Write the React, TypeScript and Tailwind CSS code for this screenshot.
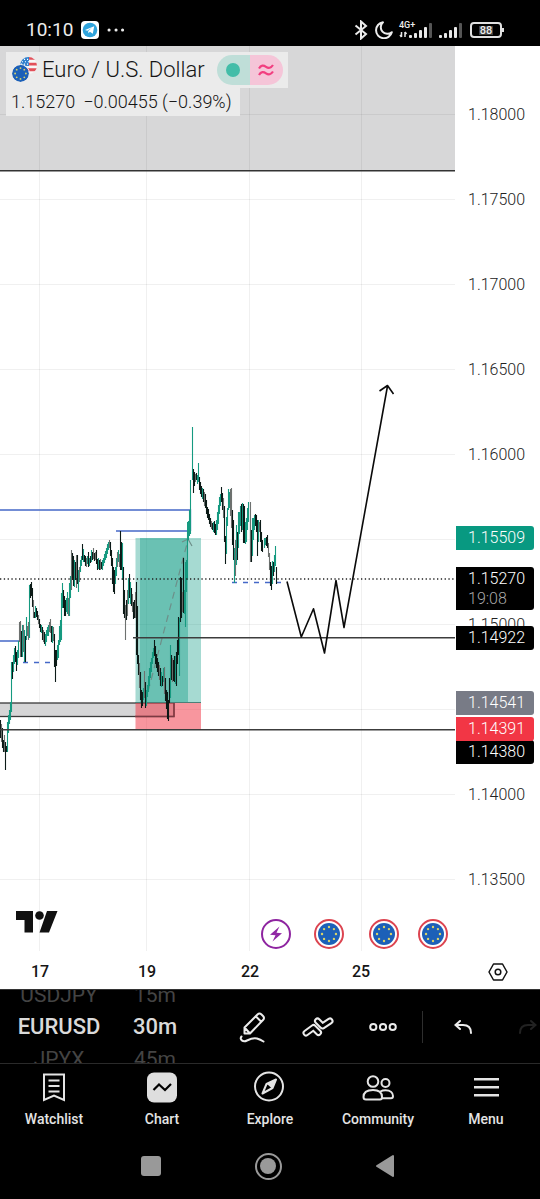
import type { ReactNode } from 'react'

type Tone = 'g' | 'k' | 'y'
type Bar = [x: number, high: number, low: number, tone: Tone]

const TONES: Record<Tone, string> = { g: '#159a80', k: '#0c1a17', y: '#6d716f' }

const bars: Bar[] = [
  [0, 720, 738, 'k'], [1, 724, 742, 'y'], [2, 728, 748, 'k'], [3, 740, 752, 'k'], [4, 735, 752, 'y'], [5, 742, 770, 'k'], [6, 746, 752, 'k'],
  [7, 722, 752, 'g'], [8, 715, 733, 'g'], [9, 710, 724, 'g'], [10, 702, 720, 'g'], [11, 662, 712, 'g'], [12, 662, 679, 'k'], [13, 655, 672, 'g'],
  [14, 648, 664, 'g'], [15, 646, 662, 'k'], [16, 652, 671, 'k'], [17, 650, 665, 'g'], [18, 641, 658, 'g'], [19, 622, 642, 'y'], [20, 621, 657, 'y'],
  [21, 631, 657, 'k'], [22, 625, 657, 'g'], [23, 625, 652, 'y'], [24, 630, 662, 'g'], [25, 636, 662, 'k'], [26, 617, 640, 'g'], [27, 626, 636, 'y'],
  [28, 622, 640, 'y'], [29, 585, 638, 'g'], [30, 584, 598, 'k'], [31, 582, 596, 'k'], [32, 588, 607, 'k'], [33, 600, 618, 'y'], [34, 612, 618, 'k'],
  [35, 606, 618, 'g'], [36, 608, 617, 'k'], [37, 611, 620, 'k'], [38, 615, 624, 'y'], [39, 619, 628, 'k'], [40, 624, 632, 'k'], [41, 625, 633, 'g'],
  [42, 627, 640, 'k'], [43, 630, 642, 'y'], [44, 632, 644, 'k'], [45, 634, 646, 'g'], [46, 630, 642, 'g'], [47, 627, 636, 'g'], [48, 625, 636, 'g'],
  [49, 622, 632, 'y'], [50, 619, 633, 'y'], [51, 626, 642, 'k'], [52, 626, 643, 'g'], [53, 627, 641, 'y'], [54, 634, 667, 'k'], [55, 650, 682, 'k'],
  [56, 650, 666, 'k'], [57, 645, 660, 'g'], [58, 640, 658, 'g'], [59, 626, 645, 'g'], [60, 620, 642, 'g'], [61, 593, 640, 'g'], [62, 583, 608, 'g'],
  [63, 590, 608, 'k'], [64, 596, 616, 'k'], [65, 600, 616, 'k'], [66, 598, 612, 'g'], [67, 592, 614, 'g'], [68, 598, 616, 'y'], [69, 583, 616, 'g'],
  [70, 576, 598, 'g'], [71, 550, 590, 'y'], [72, 553, 580, 'k'], [73, 556, 586, 'k'], [74, 560, 587, 'g'], [75, 562, 580, 'k'], [76, 555, 588, 'y'],
  [77, 555, 584, 'k'], [78, 570, 592, 'g'], [79, 567, 582, 'y'], [80, 560, 572, 'g'], [81, 556, 566, 'g'], [82, 544, 560, 'k'], [83, 549, 562, 'g'],
  [84, 555, 562, 'k'], [85, 556, 566, 'k'], [86, 558, 567, 'y'], [87, 556, 564, 'g'], [88, 552, 567, 'k'], [89, 558, 566, 'g'], [90, 556, 563, 'k'],
  [91, 550, 562, 'g'], [92, 552, 560, 'k'], [93, 548, 559, 'y'], [94, 553, 561, 'k'], [95, 552, 560, 'y'], [96, 550, 564, 'k'], [97, 559, 570, 'k'],
  [98, 558, 569, 'g'], [99, 560, 570, 'k'], [100, 559, 570, 'y'], [101, 562, 569, 'k'], [102, 560, 570, 'g'], [103, 558, 566, 'g'], [104, 554, 563, 'g'],
  [105, 551, 560, 'g'], [106, 548, 558, 'g'], [107, 544, 554, 'g'], [108, 542, 550, 'g'], [109, 540, 548, 'y'], [110, 542, 556, 'k'], [111, 550, 566, 'k'],
  [112, 558, 584, 'k'], [113, 567, 592, 'k'], [114, 570, 594, 'k'], [115, 567, 584, 'g'], [116, 558, 576, 'g'], [117, 552, 567, 'y'], [118, 550, 562, 'g'],
  [119, 554, 567, 'y'], [120, 531, 570, 'k'], [121, 542, 570, 'k'], [122, 543, 580, 'g'], [123, 567, 614, 'k'], [124, 590, 618, 'k'], [125, 605, 640, 'y'],
  [126, 600, 620, 'k'], [127, 590, 616, 'y'], [128, 578, 604, 'g'], [129, 574, 598, 'k'], [130, 582, 604, 'g'], [131, 588, 606, 'k'], [132, 594, 612, 'y'],
  [133, 602, 619, 'k'], [134, 600, 618, 'k'], [135, 592, 618, 'y'], [136, 582, 655, 'k'], [137, 606, 664, 'k'], [138, 655, 675, 'k'], [139, 663, 688, 'y'],
  [140, 672, 700, 'k'], [141, 690, 708, 'k'], [142, 692, 706, 'k'], [143, 688, 700, 'g'], [144, 671, 698, 'y'], [145, 682, 708, 'k'], [146, 690, 706, 'g'],
  [147, 685, 697, 'g'], [148, 676, 692, 'g'], [149, 668, 686, 'g'], [150, 662, 678, 'g'], [151, 658, 672, 'g'], [152, 652, 664, 'g'], [153, 648, 658, 'g'],
  [154, 640, 656, 'k'], [155, 646, 664, 'k'], [156, 654, 668, 'k'], [157, 658, 672, 'k'], [158, 662, 676, 'k'], [159, 665, 680, 'y'], [160, 668, 686, 'k'],
  [161, 672, 687, 'g'], [162, 676, 686, 'k'], [163, 668, 682, 'g'], [164, 667, 694, 'y'], [165, 678, 701, 'k'], [166, 690, 709, 'k'], [167, 692, 719, 'k'],
  [168, 700, 721, 'k'], [169, 678, 703, 'k'], [170, 645, 698, 'g'], [171, 655, 680, 'k'], [172, 658, 682, 'y'], [173, 660, 681, 'k'], [174, 656, 682, 'k'],
  [175, 656, 684, 'g'], [176, 652, 686, 'k'], [177, 640, 664, 'k'], [178, 617, 655, 'k'], [179, 618, 676, 'g'], [180, 577, 622, 'k'], [181, 578, 618, 'k'],
  [182, 592, 612, 'y'], [183, 558, 613, 'k'], [184, 590, 614, 'g'], [185, 562, 627, 'g'], [186, 560, 592, 'g'], [187, 532, 580, 'g'], [188, 521, 540, 'g'],
  [189, 510, 536, 'g'], [190, 480, 534, 'g'], [192, 427, 480, 'g'], [193, 469, 493, 'k'], [194, 472, 486, 'k'], [195, 474, 482, 'y'], [196, 473, 480, 'k'],
  [197, 475, 484, 'g'], [198, 463, 482, 'g'], [199, 477, 490, 'k'], [200, 482, 494, 'k'], [201, 486, 497, 'k'], [202, 488, 499, 'g'], [203, 489, 502, 'k'],
  [204, 492, 506, 'y'], [205, 494, 508, 'k'], [206, 500, 514, 'k'], [207, 507, 518, 'k'], [208, 509, 520, 'k'], [209, 514, 524, 'k'], [210, 518, 527, 'k'],
  [211, 521, 529, 'y'], [212, 523, 530, 'k'], [213, 522, 532, 'g'], [214, 521, 533, 'k'], [215, 524, 535, 'k'], [216, 520, 535, 'g'], [217, 512, 530, 'g'],
  [218, 505, 524, 'g'], [219, 497, 514, 'g'], [220, 494, 506, 'g'], [221, 487, 502, 'k'], [222, 493, 510, 'k'], [223, 498, 518, 'y'], [224, 506, 542, 'k'],
  [225, 536, 564, 'k'], [226, 517, 554, 'g'], [227, 508, 526, 'g'], [228, 489, 510, 'g'], [229, 492, 508, 'g'], [230, 489, 516, 'y'], [231, 488, 528, 'y'],
  [232, 510, 545, 'k'], [233, 520, 560, 'k'], [234, 548, 583, 'g'], [235, 540, 576, 'y'], [236, 525, 565, 'g'], [237, 532, 560, 'k'], [238, 512, 548, 'g'],
  [239, 512, 534, 'g'], [240, 506, 526, 'g'], [241, 504, 532, 'k'], [242, 503, 530, 'g'], [243, 504, 543, 'k'], [244, 506, 543, 'k'], [245, 522, 544, 'g'],
  [246, 518, 542, 'g'], [247, 508, 530, 'g'], [248, 502, 522, 'g'], [250, 502, 562, 'y'], [251, 530, 562, 'k'], [252, 518, 556, 'g'], [253, 518, 540, 'g'],
  [254, 515, 530, 'g'], [255, 514, 526, 'k'], [256, 515, 532, 'k'], [257, 520, 556, 'k'], [258, 520, 542, 'g'], [259, 522, 532, 'y'], [260, 520, 542, 'k'],
  [261, 532, 551, 'k'], [262, 540, 552, 'k'], [264, 538, 548, 'g'], [265, 538, 545, 'g'], [266, 537, 546, 'k'], [267, 535, 548, 'k'], [268, 543, 557, 'y'],
  [269, 553, 570, 'y'], [270, 562, 586, 'k'], [271, 566, 590, 'k'], [272, 561, 584, 'g'], [273, 562, 576, 'k'], [274, 555, 572, 'g'], [275, 546, 566, 'g'],
  [276, 567, 584, 'k'],
]

const prices = ['1.18000', '1.17500', '1.17000', '1.16500', '1.16000', '1.15500', '1.15000', '1.14500', '1.14000', '1.13500']

const gridRows = prices.map((_, i) => 114.5 + i * 85)
const gridColumns = [39, 146, 249, 361]

const events = [
  { x: 329, label: 'Economic event 1' },
  { x: 384, label: 'Economic event 2' },
  { x: 433, label: 'Economic event 3' },
]

function EuFlag({ className }: { className?: string }) {
  return (
    <svg viewBox="0 0 24 24" className={className} aria-hidden="true">
      <circle cx="12" cy="12" r="12" fill="#1c60b8" />
      {Array.from({ length: 8 }, (_, i) => {
        const a = (i * Math.PI) / 4
        return <circle key={i} cx={12 + 7.6 * Math.sin(a)} cy={12 - 7.6 * Math.cos(a)} r="1.3" fill="#d9d36a" />
      })}
    </svg>
  )
}

function UsFlag({ className }: { className?: string }) {
  return (
    <svg viewBox="0 0 18 18" className={className} aria-hidden="true">
      <clipPath id="us">
        <circle cx="9" cy="9" r="9" />
      </clipPath>
      <g clipPath="url(#us)">
        <rect width="18" height="18" fill="#f7f7f7" />
        <path fill="#e2505a" d="M9 0h9v3H9zM9 6h9v3H9zM0 12h18v3H0z" />
        <rect width="9.5" height="9.5" fill="#2f80cd" />
        <path stroke="#fff" strokeWidth="1.2" strokeDasharray="1.2 2" d="M1 2.5h8M2 5h8M1 7.5h8" />
      </g>
    </svg>
  )
}

function Signal({ x }: { x: number }) {
  return (
    <g transform={`translate(${x} 0)`}>
      {[3, 5, 8, 11, 15].map((h, i) => (
        <rect key={h} x={i * 5} y={16 - h} width="3" height={h} rx="1" fill={i === 4 ? '#555' : '#e8e8e8'} />
      ))}
    </g>
  )
}

function StatusBar() {
  return (
    <div className="flex h-[46px] items-end justify-between bg-black pr-9 pl-[26px] text-[#ececec]">
      <div className="flex h-8 items-center gap-2">
        <span className="text-[19px] leading-8">10:10</span>
        <svg viewBox="0 0 18 18" className="size-[18px]" aria-label="Telegram">
          <rect width="18" height="18" rx="4" fill="#fff" />
          <circle cx="9" cy="9" r="7.3" fill="#2fa3db" />
          <path fill="#fff" d="M4 8.9 13.2 5.2 11.8 12.8 8.9 10.8 7.4 12.2 7.2 9.9 11 6.8 6.3 9.7z" />
        </svg>
        <svg viewBox="0 0 18 4" className="h-1 w-[18px]" aria-hidden="true">
          <path stroke="#ececec" strokeWidth="3" strokeLinecap="round" d="M2 2h.1M9 2h.1M15.500 2h.1" />
        </svg>
      </div>
      <div className="flex h-8 items-center">
        <svg viewBox="0 0 14 20" className="h-5 w-[14px]" fill="none" stroke="#ececec" strokeWidth="2" aria-label="Bluetooth">
          <path d="M1.500 5.500 12 14 7 18.500V1.500L12 6 1.500 14.500" />
        </svg>
        <svg viewBox="0 0 18 18" className="ml-[7px] size-[18px]" fill="none" stroke="#ececec" strokeWidth="2" aria-label="Do not disturb">
          <path d="M8 1.300A8 8 0 1 0 16.800 11.200 6.500 6.500 0 0 1 8 1.300Z" strokeLinejoin="round" />
        </svg>
        <div className="relative ml-[6px]">
          <svg viewBox="0 0 34 16" className="h-4 w-[34px]" aria-label="Mobile signal">
            <path fill="none" stroke="#e8e8e8" strokeWidth="1.500" d="M2.500 10v5M1 13l1.500 2M6 15v-5M7.500 12 6 10" />
            <Signal x={10} />
          </svg>
          <span className="absolute -top-[3px] left-0 text-[9px] leading-3 font-medium">4G+</span>
        </div>
        <svg viewBox="0 0 24 16" className="ml-[6px] h-4 w-6" aria-label="Second signal">
          <Signal x={0} />
        </svg>
        <div className="ml-[7px] flex h-4 w-8 items-center justify-center rounded border-2 border-[#e0e0e0]">
          <span className="bg-[#3c3c3c] px-px text-[11px] leading-[9px] font-medium">88</span>
        </div>
        <div className="h-1 w-[2px] bg-[#e0e0e0]" />
      </div>
    </div>
  )
}

function ChartDrawing() {
  return (
    <svg viewBox="0 46 455 905" preserveAspectRatio="none" className="block h-full w-full" role="img" aria-label="EURUSD price chart">
      <rect y="46" width="455" height="125" fill="#d7d7d8" />
      <g stroke="#000" strokeOpacity=".06">
        {gridRows.map((y) => (
          <path key={y} d={`M0 ${y}H455`} />
        ))}
        {gridColumns.map((x) => (
          <path key={x} d={`M${x}.5 46V951`} />
        ))}
      </g>
      <path stroke="#333" strokeWidth="1.500" d="M0 170.700H455" />

      <rect x="-2" y="703" width="176" height="13.500" fill="#d5d5d6" stroke="#3a3a3a" strokeWidth="1.300" />
      <rect x="135.500" y="538" width="65.500" height="165" fill="#089981" fillOpacity=".36" />
      <rect x="140" y="538" width="48" height="165" fill="#089981" fillOpacity=".38" />
      <rect x="135.500" y="703" width="65.500" height="26" fill="#f23645" fillOpacity=".52" />
      <path fill="none" stroke="#7a3a42" strokeWidth="1.300" d="M135 716.500h39V703" />
      <path stroke="#4c7f78" d="M135 702.500h66" />
      <path fill="none" stroke="#6d8f89" strokeWidth="1.200" strokeDasharray="7 5" d="M145 703 188 540" />
      <path fill="none" stroke="#6d8f89" strokeWidth="1.200" d="M182 542l6-3 4 7" />

      <g fill="none" stroke="#4568c8" strokeWidth="1.300">
        <path d="M0 510H190.500V531M116 531H188.500M0 641H20" />
        <path strokeDasharray="5 6" d="M23 662.500H50M232 582.500H282" />
      </g>
      {bars.map(([x, high, low, tone]) => (
        <path key={x} stroke={TONES[tone]} strokeWidth="1.100" d={`M${x}.5 ${high}V${low}`} />
      ))}
      <path stroke="#159a80" strokeWidth="4" d="M189 522v10" />
      <path stroke="#222" strokeWidth="1.300" strokeDasharray="1.300 2.500" d="M0 579H455" />
      <path stroke="#3c3c3c" strokeWidth="1.500" d="M133 637.700H455M0 729.700H455" />
      <path
        fill="none"
        stroke="#0a0a0a"
        strokeWidth="1.600"
        strokeLinejoin="round"
        d="M287 581.500 301.300 637 313.500 608.800 324.500 653 336 580.500 344 627.500 387.500 386M379.500 391l8-5.500 6 8.500"
      />
    </svg>
  )
}

function Legend() {
  return (
    <div className="absolute top-[6px] left-[6px] flex flex-col items-start font-light text-[#151515]">
      <div className="flex h-9 items-center bg-[#ebebeb] pr-[5px] pl-[5px]">
        <div className="relative size-[26px]">
          <UsFlag className="absolute top-0 right-0 size-[17px]" />
          <EuFlag className="absolute bottom-0 left-0 size-[19px] rounded-full border border-[#ebebeb]" />
        </div>
        <h1 className="ml-[5px] text-[22px] leading-9 whitespace-nowrap">Euro / U.S. Dollar</h1>
        <div className="ml-3 flex h-[30px] w-[66px] overflow-hidden rounded-full">
          <div className="flex flex-1 items-center justify-center bg-[#bfded8]">
            <span className="size-[14px] rounded-full bg-[#42bda8]" />
          </div>
          <div className="flex flex-1 items-center justify-center bg-[#f5c5d8]">
            <svg viewBox="0 0 16 14" className="h-[14px] w-4" fill="none" stroke="#f23f80" strokeWidth="2.200" aria-hidden="true">
              <path d="M1 5.500C3 2 5.500 2 8 3.800S13 5 15 2M1 12C3 8.500 5.500 8.500 8 10.300S13 11.500 15 8.500" />
            </svg>
          </div>
        </div>
      </div>
      <p className="flex h-7 gap-2 bg-[#ebebeb] pr-2 pl-[5px] text-[18px] leading-7">
        <span>1.15270</span>
        <span>−0.00455 (−0.39%)</span>
      </p>
    </div>
  )
}

function Chart() {
  return (
    <div className="relative min-w-0 flex-1 overflow-hidden">
      <ChartDrawing />
      <Legend />
      <svg viewBox="0 0 42 22" className="absolute bottom-[18px] left-4 h-[22px] w-[42px]" fill="#111" aria-label="TradingView">
        <path d="M0 0h17v21.500H8.500V9H0zM31 0h10.500L33 21.500H23.500z" />
        <circle cx="23.500" cy="4.500" r="4.300" />
      </svg>
      <button
        aria-label="Latest news"
        className="absolute bottom-[2px] flex size-[30px] -translate-x-1/2 items-center justify-center rounded-full border-2 border-[#8e24a0] bg-white"
        style={{ left: `${(276 / 455) * 100}%` }}
      >
        <svg viewBox="0 0 14 16" className="h-4 w-[14px]" fill="#9128a5" aria-hidden="true">
          <path d="M10.500.500 1 8.800 6.500 9.200 3.500 15.500 13 7.200 7.500 6.800z" />
        </svg>
      </button>
      {events.map((e) => (
        <button
          key={e.label}
          aria-label={e.label}
          className="absolute bottom-[2px] flex size-[30px] -translate-x-1/2 items-center justify-center rounded-full border-2 border-[#dc4450] bg-white"
          style={{ left: `${(e.x / 455) * 100}%` }}
        >
          <EuFlag className="size-[22px]" />
        </button>
      ))}
    </div>
  )
}

function PriceScale() {
  const tag = 'absolute left-px w-[78px] rounded-r-[3px] pl-3 text-white leading-6'
  return (
    <div className="relative w-[85px] shrink-0 overflow-hidden bg-white pt-[26px] text-base font-light text-[#222]">
      {prices.map((p) => (
        <div key={p} className="flex h-[85px] items-center pl-[13px]">
          {p}
        </div>
      ))}
      <div className={`${tag} top-[480px] bg-[#089981]`}>1.15509</div>
      <div className={`${tag} top-[521px] bg-black pb-[3px]`}>
        <div>1.15270</div>
        <div className="leading-4 text-[#a8a8a8]">19:08</div>
      </div>
      <div className={`${tag} top-[580px] bg-black`}>1.14922</div>
      <div className={`${tag} top-[694px] bg-black`}>1.14380</div>
      <div className={`${tag} top-[645px] bg-[#787b86]`}>1.14541</div>
      <div className={`${tag} top-[671px] bg-[#f23645]`}>1.14391</div>
    </div>
  )
}

function TimeScale() {
  return (
    <div className="grid h-[38px] grid-cols-[80px_134px_72px_150px_1fr_85px] items-center justify-items-center bg-white pt-[3px] text-base font-medium text-[#151515]">
      <span>17</span>
      <span>19</span>
      <span>22</span>
      <span>25</span>
      <span />
      <button aria-label="Scale settings">
        <svg viewBox="0 0 20 18" className="h-[18px] w-5" fill="none" stroke="#111" strokeWidth="1.500" aria-hidden="true">
          <path d="M5.500 1h9L19 9l-4.500 8h-9L1 9z" strokeLinejoin="round" />
          <circle cx="10" cy="9" r="2.800" />
        </svg>
      </button>
    </div>
  )
}

function Picker({ items, className }: { items: string[]; className: string }) {
  return (
    <div className={`flex h-full shrink-0 flex-col items-center justify-center overflow-hidden ${className}`}>
      {items.map((item, i) => (
        <button
          key={item}
          className={
            i === 1
              ? 'h-8 shrink-0 text-[22px] leading-8 font-medium text-[#dadada]'
              : 'h-8 shrink-0 text-[21px] leading-8 font-normal text-[#444]'
          }
        >
          {item}
        </button>
      ))}
    </div>
  )
}

function Tool({ label, children }: { label: string; children: ReactNode }) {
  return (
    <button aria-label={label} className="flex h-full w-[65px] shrink-0 items-center justify-center text-[#ececec]">
      {children}
    </button>
  )
}

function Toolbar() {
  return (
    <div className="flex h-[74px] items-center overflow-hidden border-t border-[#333] bg-black">
      <Picker items={['USDJPY', 'EURUSD', 'JPYX']} className="w-[118px]" />
      <Picker items={['15m', '30m', '45m']} className="w-[74px]" />
      <div className="ml-7 flex h-full items-center">
        <Tool label="Draw">
          <svg viewBox="0 0 28 32" className="h-8 w-7" fill="none" stroke="currentColor" strokeWidth="2" strokeLinejoin="round">
            <path d="M5.500 22.500V16.500L18.500 3.500Q20.500 1.500 22.500 3.500L24 5Q26 7 24 9L11 22.500zM17 5.500l5.500 5.500M5.500 16.500 11 22.500" />
            <path strokeLinecap="round" d="M2.500 25.500C0 28.500 4 31.500 8 29.500S15 26.500 18 27.500 22 29 24.500 30.500" />
          </svg>
        </Tool>
        <Tool label="Indicators">
          <svg viewBox="0 0 32 20" className="h-5 w-8" fill="none" strokeLinecap="round" strokeLinejoin="round" aria-hidden="true">
            <path stroke="currentColor" strokeWidth="7" d="M4 16 11.500 10.500 16.500 15.500" />
            <path stroke="#000" strokeWidth="3" d="M4 16 11.500 10.500 16.500 15.500" />
            <path stroke="currentColor" strokeWidth="7" d="M15.500 4 20.500 9 28 4" />
            <path stroke="#000" strokeWidth="3" d="M15.500 4 20.500 9 28 4" />
          </svg>
        </Tool>
        <Tool label="More">
          <svg viewBox="0 0 28 10" className="h-[10px] w-7" fill="none" stroke="currentColor" strokeWidth="2" aria-hidden="true">
            <circle cx="4.300" cy="5" r="3.100" />
            <circle cx="14" cy="5" r="3.100" />
            <circle cx="23.700" cy="5" r="3.100" />
          </svg>
        </Tool>
        <div className="mx-[7px] h-8 w-px bg-[#2e2e2e]" />
        <Tool label="Undo">
          <UndoIcon className="h-[14px] w-[18px]" />
        </Tool>
        <button aria-label="Redo" disabled className="flex h-full w-[65px] shrink-0 items-center justify-center text-[#222]">
          <UndoIcon className="h-[14px] w-[18px] -scale-x-100" />
        </button>
      </div>
    </div>
  )
}

function UndoIcon({ className }: { className: string }) {
  return (
    <svg viewBox="0 0 18 14" className={className} fill="none" stroke="currentColor" strokeWidth="2" strokeLinecap="round" aria-hidden="true">
      <path d="M6 1 1.500 5 6 9M2 5H9Q17 5 17 13" />
    </svg>
  )
}

const tabs: { label: string; icon: ReactNode }[] = [
  {
    label: 'Watchlist',
    icon: (
      <svg viewBox="0 0 32 32" className="size-8" fill="none" stroke="currentColor" strokeWidth="2" aria-hidden="true">
        <path d="M6 3.500h20V29l-10-4.500L6 29zM10.500 9.500h11M10.500 15h11M10.500 20.500h11" />
      </svg>
    ),
  },
  {
    label: 'Chart',
    icon: (
      <svg viewBox="0 0 32 32" className="size-8" fill="none" aria-hidden="true">
        <rect x="1" y="1.500" width="30" height="30" rx="7" fill="#dedede" />
        <path stroke="#000" strokeWidth="2.200" d="m7.500 19 5.500-5.500 6 5.500 6-6" />
      </svg>
    ),
  },
  {
    label: 'Explore',
    icon: (
      <svg viewBox="0 0 32 32" className="size-8" fill="none" stroke="currentColor" strokeWidth="2" aria-hidden="true">
        <circle cx="15" cy="15.500" r="14" />
        <path strokeLinejoin="round" d="M22 8.500 18.500 17 8.500 22.500 12.500 13z" />
        <path fill="currentColor" stroke="none" d="M22.500 8 18.500 18 12.500 12.500z" />
      </svg>
    ),
  },
  {
    label: 'Community',
    icon: (
      <svg viewBox="0 0 32 32" className="size-8" fill="none" stroke="currentColor" strokeWidth="2" aria-hidden="true">
        <circle cx="11" cy="10.500" r="5.300" />
        <circle cx="23.500" cy="12" r="4" />
        <path d="M4 28.500C2 28.500 1.500 27.500 1.500 26 1.500 21.500 5 19 11 19S20 21.500 20 26C20 27.500 19.500 28.500 18 28.500zM18.500 20.500C20 19.500 21.500 19.200 23.500 19.200 28.500 19.200 31 22 31 25 31 26.500 30.500 27.300 29 27.300H20" />
      </svg>
    ),
  },
  {
    label: 'Menu',
    icon: (
      <svg viewBox="0 0 32 32" className="size-8" stroke="currentColor" strokeWidth="2.500" aria-hidden="true">
        <path d="M4 8.300h25M4 16.300h25M4 24.300h25" />
      </svg>
    ),
  },
]

export default function App() {
  return (
    <div className="flex min-h-screen flex-col bg-black font-['Roboto',sans-serif]">
      <StatusBar />
      <main className="flex flex-1 flex-col bg-white">
        <div className="flex h-[905px]">
          <Chart />
          <PriceScale />
        </div>
        <TimeScale />
      </main>
      <Toolbar />
      <nav className="grid grid-cols-5 border-t border-[#2a2a2a] pt-[7px] text-[#e4e4e4]">
        {tabs.map((t) => (
          <button key={t.label} className="flex flex-col items-center gap-[6px]">
            {t.icon}
            <span className="text-sm leading-5 font-medium">{t.label}</span>
          </button>
        ))}
      </nav>
      <div className="flex h-[70px] items-center justify-center gap-[90px] pt-1 pr-1">
        <button aria-label="Recent apps" className="flex w-[27px] justify-center">
          <span className="size-5 rounded-[3px] bg-[#999]" />
        </button>
        <button aria-label="Home" className="flex size-[27px] items-center justify-center rounded-full border-2 border-[#999]">
          <span className="size-4 rounded-full bg-[#999]" />
        </button>
        <button aria-label="Back" className="flex w-[27px] justify-center">
          <svg viewBox="0 0 20 24" className="h-6 w-5" fill="#999" stroke="#999" strokeWidth="2" strokeLinejoin="round" aria-hidden="true">
            <path d="M18 2v20L2 12z" />
          </svg>
        </button>
      </div>
    </div>
  )
}
